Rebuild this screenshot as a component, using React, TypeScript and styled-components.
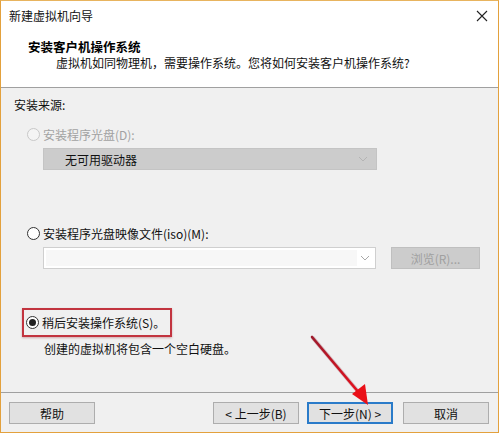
import React from 'react';
import styled, { createGlobalStyle } from 'styled-components';

const GlobalStyle = createGlobalStyle`
  html, body {
    margin: 0;
    padding: 0;
    background: #ffffff;
  }
  * {
    box-sizing: border-box;
  }
`;

export default function App() {
  return (
    <>
      <GlobalStyle />
      <Window>
        <TitleBar>
          <TitleText>新建虚拟机向导</TitleText>
          <CloseButton>
            <svg width="12" height="12" viewBox="0 0 12 12">
              <path d="M1 1 L11 11 M11 1 L1 11" stroke="#222" strokeWidth="1.1" fill="none" />
            </svg>
          </CloseButton>
        </TitleBar>

        <Header>
          <Heading>安装客户机操作系统</Heading>
          <SubHeading>虚拟机如同物理机，需要操作系统。您将如何安装客户机操作系统?</SubHeading>
        </Header>

        <Body>
          <Label>安装来源:</Label>

          <RadioRow disabled top="13px">
            <Radio disabled />
            <span>安装程序光盘(D):</span>
          </RadioRow>
          <FieldRow top="6px">
            <DriveSelect>
              <span>无可用驱动器</span>
              <Chevron color="#b4b4b4" />
            </DriveSelect>
          </FieldRow>

          <RadioRow top="55px">
            <Radio />
            <span>安装程序光盘映像文件(iso)(M):</span>
          </RadioRow>
          <FieldRow top="6px">
            <IsoCombo>
              <IsoInput />
              <ComboArrow>
                <Chevron color="#a8a8a8" />
              </ComboArrow>
            </IsoCombo>
            <BrowseButton>浏览(R)...</BrowseButton>
          </FieldRow>

          <Highlight>
            <RadioRow top="0">
              <Radio checked />
              <span>稍后安装操作系统(S)。</span>
            </RadioRow>
          </Highlight>
          <Note>创建的虚拟机将包含一个空白硬盘。</Note>
        </Body>

        <Footer>
          <Button>帮助</Button>
          <Spacer />
          <Button>&lt; 上一步(B)</Button>
          <Button primary>下一步(N) &gt;</Button>
          <Button gap>取消</Button>
        </Footer>

        <ArrowOverlay width="499" height="433" viewBox="0 0 499 433">
          <defs>
            <linearGradient id="arr" x1="0" y1="0" x2="1" y2="1">
              <stop offset="0" stopColor="#9e1a2c" />
              <stop offset="1" stopColor="#e8101c" />
            </linearGradient>
          </defs>
          <path d="M311 336 L359 393" stroke="#7a2030" strokeOpacity="0.25" strokeWidth="4" strokeLinecap="round" transform="translate(1,1)" />
          <path d="M311 336 L359 393" stroke="url(#arr)" strokeWidth="2.6" strokeLinecap="round" />
          <path d="M367 404 L351 393 L364 383 Z" fill="#ea1018" />
        </ArrowOverlay>
      </Window>
    </>
  );
}

function Chevron({ color }: { color: string }) {
  return (
    <svg width="10" height="6" viewBox="0 0 10 6">
      <path d="M1 1 L5 5 L9 1" stroke={color} strokeWidth="1" fill="none" />
    </svg>
  );
}

// Window ---------------------------------------------------------
const Window = styled.div`
  position: relative;
  width: 499px;
  height: 433px;
  border: 1px solid #e3a13d;
  border-top-color: #e8b45e;
  background: #f0f0f0;
  font-family: "Microsoft YaHei", "Noto Sans CJK SC", "Liberation Sans", sans-serif;
  font-size: 12px;
  color: #000;
  overflow: hidden;
  display: flex;
  flex-direction: column;
`;

const TitleBar = styled.div`
  height: 29px;
  background: #ffffff;
  display: flex;
  align-items: center;
  justify-content: space-between;
  padding: 0 10px 0 8px;
`;

const TitleText = styled.div`
  font-size: 12px;
  color: #111;
`;

const CloseButton = styled.div`
  display: flex;
  align-items: center;
`;

// Header ---------------------------------------------------------
const Header = styled.div`
  height: 58px;
  background: #ffffff;
  border-bottom: 1px solid #a0a0a0;
  padding: 9px 0 0 27px;
`;

const Heading = styled.div`
  font-weight: 700;
  font-size: 12.5px;
  line-height: 16px;
  color: #000;
`;

const SubHeading = styled.div`
  padding-left: 28px;
  line-height: 16px;
  color: #111;
`;

// Body -----------------------------------------------------------
const Body = styled.div`
  flex: 1;
  padding: 9px 0 0 13px;
  display: flex;
  flex-direction: column;
  align-items: flex-start;
`;

const Label = styled.div`
  line-height: 16px;
  color: #111;
`;

const RadioRow = styled.div<{ disabled?: boolean; top: string }>`
  display: flex;
  align-items: center;
  gap: 3px;
  margin-top: ${(p) => p.top};
  margin-left: 13px;
  height: 16px;
  color: ${(p) => (p.disabled ? '#a2a2a2' : '#111')};
`;

const Radio = styled.span<{ checked?: boolean; disabled?: boolean }>`
  width: 13px;
  height: 13px;
  border-radius: 50%;
  border: 1px solid ${(p) => (p.disabled ? '#c8c8c8' : '#333')};
  background: ${(p) => (p.disabled ? '#f4f4f4' : '#fff')};
  display: flex;
  align-items: center;
  justify-content: center;
  &::after {
    content: '';
    display: ${(p) => (p.checked ? 'block' : 'none')};
    width: 7px;
    height: 7px;
    border-radius: 50%;
    background: #222;
  }
`;

const FieldRow = styled.div<{ top: string }>`
  display: flex;
  align-items: center;
  gap: 15px;
  margin-top: ${(p) => p.top};
  margin-left: 29px;
`;

const DriveSelect = styled.div`
  width: 334px;
  height: 22px;
  background: #cccccc;
  border: 1px solid #c4c4c4;
  display: flex;
  align-items: center;
  justify-content: space-between;
  padding: 0 8px 0 21px;
  color: #111;
`;

const IsoCombo = styled.div`
  width: 333px;
  height: 22px;
  background: #ffffff;
  border: 1px solid #cfcfcf;
  display: flex;
  padding: 2px;
`;

const IsoInput = styled.div`
  flex: 1;
  background: #f7f7f7;
`;

const ComboArrow = styled.div`
  width: 16px;
  display: flex;
  align-items: center;
  justify-content: center;
`;

const BrowseButton = styled.div`
  width: 89px;
  height: 22px;
  background: #cccccc;
  border: 1px solid #bfbfbf;
  color: #a0a0a0;
  display: flex;
  align-items: center;
  justify-content: center;
`;

const Highlight = styled.div`
  margin-top: 39px;
  margin-left: 8px;
  width: 150px;
  height: 29px;
  border: 2px solid #c2343f;
  box-shadow: 0 1px 2px rgba(150, 40, 50, 0.35);
  display: flex;
  align-items: center;
  & > div {
    margin-left: 2px;
  }
`;

const Note = styled.div`
  margin-top: 4px;
  margin-left: 30px;
  line-height: 16px;
  color: #111;
`;

// Footer ---------------------------------------------------------
const Footer = styled.div`
  height: 40px;
  border-top: 1px solid #a0a0a0;
  display: flex;
  align-items: flex-start;
  padding: 9px 9px 0 8px;
  gap: 8px;
`;

const Spacer = styled.div`
  flex: 1;
`;

const Button = styled.div<{ primary?: boolean; gap?: boolean }>`
  width: 86px;
  height: 22px;
  background: #e1e1e1;
  border: ${(p) => (p.primary ? '2px solid #2a7bc9' : '1px solid #adadad')};
  margin-left: ${(p) => (p.gap ? '2px' : '0')};
  display: flex;
  align-items: center;
  justify-content: center;
  color: #111;
`;

// Overlays -------------------------------------------------------
const ArrowOverlay = styled.svg`
  position: absolute;
  left: 0;
  top: 0;
  pointer-events: none;
`;
